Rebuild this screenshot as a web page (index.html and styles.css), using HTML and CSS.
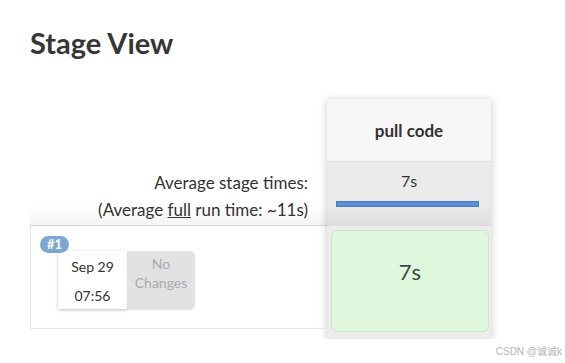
FILE: index.html
```html
<!DOCTYPE html>
<html lang="en">
<head>
  <meta charset="UTF-8" />
  <title>Stage View</title>
  <link rel="stylesheet" href="styles.css">
</head>
<body>
  <div class="page">
    <h2 class="title">Stage View</h2>

    <div class="stage-view">
      <div class="left-col">
        <div class="head-spacer"></div>
        <div class="avg-times">
          <div>Average stage times:</div>
          <div>(Average <u>full</u> run time: ~11s)</div>
        </div>
        <div class="build-row">
          <span class="badge">#1</span>
          <div class="build-date">
            <div>Sep 29</div>
            <div>07:56</div>
          </div>
          <div class="changes">No<br>Changes</div>
        </div>
      </div>

      <div class="stage-col">
        <div class="stage-name">pull code</div>
        <div class="stage-avg">
          <div class="avg-value">7s</div>
          <div class="avg-bar"></div>
        </div>
        <div class="stage-cell">
          <div class="cell-time">7s</div>
        </div>
      </div>
    </div>
  </div>

  <div class="watermark">CSDN @诚诚k</div>
</body>
</html>
```

FILE: styles.css
```css
body {
  margin: 0;
  font-family: Lato, 'DejaVu Sans', 'Noto Sans CJK SC', sans-serif;
  color: #333;
  background: #fff;
}

.page {
  padding: 26px 0 0 30px;
}

.title {
  margin: 0;
  font-size: 29px;
  font-weight: bold;
  color: #363636;
  line-height: 34px;
}

.stage-view {
  display: flex;
  margin-top: 39px;
}

.left-col {
  width: 297px;
}

.head-spacer {
  height: 63px;
}

.avg-times {
  height: 64px;
  border-bottom: 1px solid #d4d4d4;
  background: linear-gradient(to bottom, #fff 70%, #f4f4f4 100%);
  text-align: right;
  font-size: 17px;
  line-height: 27px;
  padding: 7px 19px 0 0;
  box-sizing: border-box;
}

.build-row {
  position: relative;
  height: 103px;
  border-left: 1px solid #e6e6e6;
  border-bottom: 1px solid #e6e6e6;
  box-sizing: border-box;
  display: flex;
  align-items: flex-start;
  padding: 25px 0 0 27px;
}

.badge {
  position: absolute;
  left: 9px;
  top: 10px;
  background: #7ca7d3;
  color: #fff;
  font-size: 13px;
  font-weight: bold;
  padding: 1px 7px;
  border-radius: 9px;
  line-height: 15px;
}

.build-date {
  width: 69px;
  height: 58px;
  background: #fff;
  box-shadow: 0 1px 3px rgba(0,0,0,0.25);
  text-align: center;
  font-size: 14px;
  line-height: 29px;
  padding-top: 1px;
  box-sizing: border-box;
}

.changes {
  width: 68px;
  height: 58px;
  background: #e2e2e2;
  border-radius: 0 5px 5px 0;
  box-shadow: 0 1px 2px rgba(0,0,0,0.12);
  color: #aaa;
  font-size: 14px;
  line-height: 19px;
  text-align: center;
  padding-top: 3px;
  box-sizing: border-box;
}

.stage-col {
  width: 164px;
  background: #ececec;
  box-shadow: 0 1px 8px rgba(0,0,0,0.22);
  padding-bottom: 7px;
}

.stage-name {
  height: 63px;
  background: #f7f7f7;
  border-bottom: 1px solid #e0e0e0;
  box-sizing: border-box;
  display: flex;
  align-items: center;
  justify-content: center;
  font-size: 17px;
  font-weight: bold;
}

.stage-avg {
  height: 64px;
  background: linear-gradient(to bottom, #ebebeb 65%, #dcdcdc 100%);
  padding-top: 9px;
  box-sizing: border-box;
  text-align: center;
  font-size: 16px;
}

.avg-value {
  line-height: 20px;
}

.avg-bar {
  height: 4px;
  margin: 10px 12px 0 9px;
  background: #5d8fd6;
  border: 1px solid #4a7cc4;
}

.stage-cell {
  margin: 4px 2px 0 4px;
  height: 102px;
  background: #dff7dd;
  border: 1px solid #cfe3cd;
  border-radius: 6px;
  box-sizing: border-box;
  display: flex;
  justify-content: center;
  padding-top: 27px;
}

.cell-time {
  font-size: 22px;
  color: #444;
}

.watermark {
  position: absolute;
  right: 3px;
  bottom: 5px;
  font-family: 'Liberation Sans', 'Noto Sans CJK SC', sans-serif;
  font-size: 10px;
  color: #b5b5b5;
}
```
